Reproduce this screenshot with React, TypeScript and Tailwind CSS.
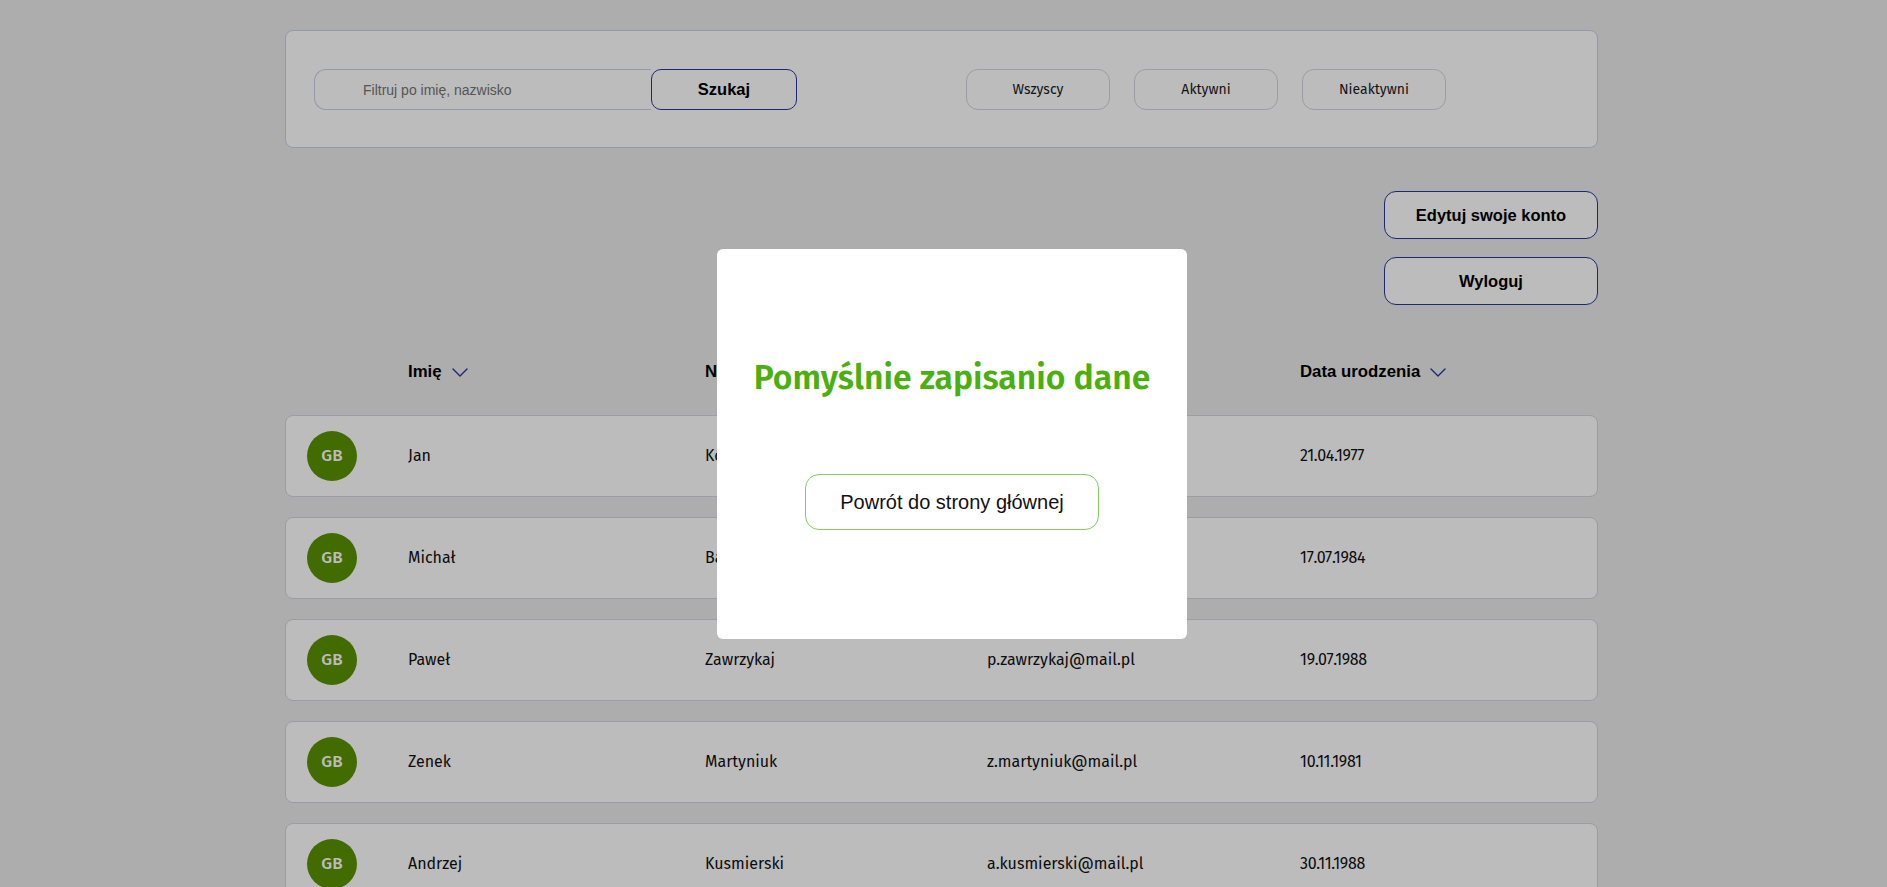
const users = [
  { first: "Jan", last: "Kowalski", email: "j.kowalski@mail.pl", born: "21.04.1977" },
  { first: "Michał", last: "Bałaban", email: "m.balaban@mail.pl", born: "17.07.1984" },
  { first: "Paweł", last: "Zawrzykaj", email: "p.zawrzykaj@mail.pl", born: "19.07.1988" },
  { first: "Zenek", last: "Martyniuk", email: "z.martyniuk@mail.pl", born: "10.11.1981" },
  { first: "Andrzej", last: "Kusmierski", email: "a.kusmierski@mail.pl", born: "30.11.1988" },
];

const fira = "font-['Fira_Sans','Fira_Sans_Condensed','Roboto',sans-serif]";
const arial = "font-['Liberation_Sans',Arial,sans-serif]";

function Chevron() {
  return (
    <svg width="16" height="9" viewBox="0 0 16 9" fill="none" className="ml-[10px]">
      <path d="M1 1l7 7 7-7" stroke="#28379c" strokeWidth="1.4" strokeLinecap="round" strokeLinejoin="round" />
    </svg>
  );
}

export default function App() {
  return (
    <div className="relative h-screen overflow-hidden bg-[#ebebeb]">
      <div className="w-[1313px] ml-[285px] pt-[30px]">

        {/* filtry */}
        <div className="h-[118px] bg-white border border-[#c9cfe6] rounded-[8px] flex items-start pt-[38px] pl-[28px]">
          <div className="flex">
            <input
              placeholder="Filtruj po imię, nazwisko"
              className={`w-[337px] h-[41px] border border-r-0 border-[#c9cfe6] rounded-l-[12px] pl-[48px] text-[14px] text-[#333] placeholder:text-[#757575] outline-none bg-white ${arial}`}
            />
            <button className={`w-[146px] h-[41px] border border-[#28379c] rounded-[10px] bg-white text-[16.5px] font-bold text-black ${arial}`}>
              Szukaj
            </button>
          </div>
          <div className="flex gap-[24px] ml-[169px]">
            {["Wszyscy", "Aktywni", "Nieaktywni"].map((label) => (
              <button key={label} className={`w-[144px] h-[41px] border border-[#d2d5de] rounded-[12px] bg-white text-[14px] text-[#1a1a1a] ${fira}`}>
                {label}
              </button>
            ))}
          </div>
        </div>

        {/* konto */}
        <div className="flex flex-col items-end gap-[18px] mt-[43px]">
          <button className={`w-[214px] h-[48px] border border-[#28379c] rounded-[12px] bg-white text-[16.5px] font-bold text-black ${arial}`}>
            Edytuj swoje konto
          </button>
          <button className={`w-[214px] h-[48px] border border-[#28379c] rounded-[12px] bg-white text-[16.5px] font-bold text-black ${arial}`}>
            Wyloguj
          </button>
        </div>

        {/* naglowek tabeli */}
        <div className={`flex items-center h-[24px] mt-[55px] pl-[123px] text-[16.8px] font-bold text-black ${arial}`}>
          <div className="w-[297px] flex items-center">Imię<Chevron /></div>
          <div className="w-[282px] flex items-center">Nazwisko<Chevron /></div>
          <div className="w-[313px] flex items-center">E-mail<Chevron /></div>
          <div className="flex items-center">Data urodzenia<Chevron /></div>
        </div>

        {/* wiersze */}
        <div className="flex flex-col gap-[20px] mt-[31px]">
          {users.map((u) => (
            <div key={u.email} className={`h-[82px] shrink-0 bg-white border border-[#d2d5de] rounded-[8px] flex items-center pl-[21px] text-[16px] text-[#111] proportional-nums ${fira}`}>
              <div className="w-[50px] h-[50px] rounded-full bg-[#5a9100] text-white text-[17px] font-medium flex items-center justify-center">GB</div>
              <div className="w-[297px] ml-[51px]">{u.first}</div>
              <div className="w-[282px]">{u.last}</div>
              <div className="w-[313px]">{u.email}</div>
              <div className="tracking-[-0.3px]">{u.born}</div>
            </div>
          ))}
        </div>
      </div>

      {/* modal */}
      <div className="fixed inset-0 bg-[rgba(0,0,0,0.263)] flex items-center justify-center pl-[17px]">
        <div className="w-[470px] h-[390px] bg-white rounded-[6px] flex flex-col items-center pt-[109px]">
          <div className={`text-[33.7px] leading-[40px] font-semibold text-[#4caf10] ${fira}`}>
            Pomyślnie zapisanio dane
          </div>
          <button className={`mt-[76px] w-[294px] h-[56px] border-[1.5px] border-[#84cc5c] rounded-[14px] bg-white text-[20px] text-[#111] ${arial}`}>
            Powrót do strony głównej
          </button>
        </div>
      </div>
    </div>
  );
}
